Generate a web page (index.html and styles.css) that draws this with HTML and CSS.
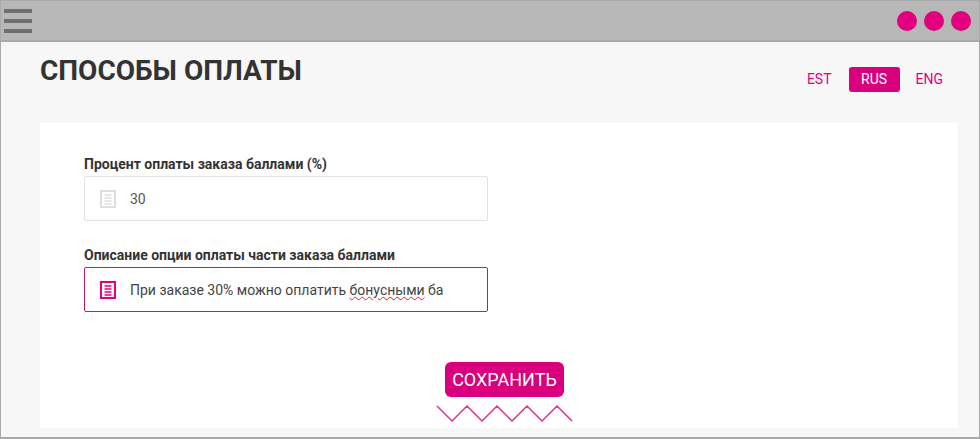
FILE: index.html
```html
<!DOCTYPE html>
<html lang="ru">
<head>
    <meta charset="UTF-8">
    <meta name="viewport" content="width=device-width, initial-scale=1.0">
    <title>Способы оплаты</title>
    <link rel="stylesheet" href="styles.css">
</head>
<body>

    <div class="window">
        <!-- Top bar with menu and dots -->
        <div class="top-bar">
            <div class="menu-icon">
                <span></span>
                <span></span>
                <span></span>
            </div>
            <div class="dots">
                <span></span>
                <span></span>
                <span></span>
            </div>
        </div>

        <div class="content">
            <div class="page-head">
                <h1>СПОСОБЫ ОПЛАТЫ</h1>
                <div class="lang-switch">
                    <a class="lang lang-est">EST</a>
                    <a class="lang lang-active">RUS</a>
                    <a class="lang lang-eng">ENG</a>
                </div>
            </div>

            <div class="card">
                <div class="field">
                    <label>Процент оплаты заказа баллами (%)</label>
                    <div class="input-box">
                        <svg class="doc-icon" width="16" height="18" viewBox="0 0 16 18">
                            <rect x="1" y="1" width="14" height="16" fill="none" stroke="#dedede" stroke-width="2"/>
                            <path d="M4.5 5h7M4.5 8h7M4.5 11h7M4.5 14h7" stroke="#dedede" stroke-width="1.4"/>
                        </svg>
                        <span class="input-text">30</span>
                    </div>
                </div>

                <div class="field">
                    <label>Описание опции оплаты части заказа баллами</label>
                    <div class="input-box input-focus">
                        <svg class="doc-icon" width="16" height="18" viewBox="0 0 16 18">
                            <rect x="1" y="1" width="14" height="16" fill="none" stroke="#e2007f" stroke-width="2"/>
                            <path d="M4.5 5h7M4.5 8h7M4.5 11h7M4.5 14h7" stroke="#e2007f" stroke-width="1.6"/>
                        </svg>
                        <span class="input-text">При заказе 30% можно оплатить <span class="misspelled">бонусными</span> ба</span>
                    </div>
                </div>

                <div class="save-area">
                    <button class="save-button">СОХРАНИТЬ</button>
                    <svg class="zigzag" width="138" height="17" viewBox="0 0 138 17">
                        <path d="M1 1l15 15 15-15 15 15 15-15 15 15 15-15 15 15 15-15 15 15" fill="none" stroke="#e8338f" stroke-width="1.5"/>
                    </svg>
                </div>
            </div>
        </div>
    </div>

</body>
</html>
```

FILE: styles.css
```css
/* Main page */
html, body {
    margin: 0;
    padding: 0;
}

body {
    font-family: Roboto, "Liberation Sans", sans-serif;
    background-color: #f7f7f7;
    color: #333;
}

.window {
    box-sizing: border-box;
    width: 980px;
    height: 439px;
    display: flex;
    flex-direction: column;
    border-left: 1px solid #aaa;
    border-right: 1px solid #aaa;
    border-bottom: 2px solid #aaa;
    overflow: hidden;
}

/* Grey top bar */
.top-bar {
    flex: none;
    height: 42px;
    box-sizing: border-box;
    display: flex;
    justify-content: space-between;
    align-items: center;
    padding: 0 8px 0 3px;
    background-color: #b7b7b7;
    border-top: 1px solid #aaa;
    border-bottom: 2px solid #a9a9a9;
    margin-bottom: 0;
}

.menu-icon {
    display: flex;
    flex-direction: column;
    gap: 6px;
}

.menu-icon span {
    display: block;
    width: 28px;
    height: 4px;
    background-color: #6f6f6f;
}

.dots {
    display: flex;
    gap: 7px;
}

.dots span {
    display: block;
    width: 20px;
    height: 20px;
    border-radius: 50%;
    background-color: #e2007f;
}

/* Title and language switch */
.content {
    flex: 1;
    display: flex;
    flex-direction: column;
    padding: 0 21px 9px 39px;
}

.page-head {
    flex: none;
    height: 81px;
    display: flex;
    justify-content: space-between;
    align-items: flex-start;
}

.page-head h1 {
    margin: 13px 0 0 0;
    font-size: 28px;
    line-height: 32px;
    font-weight: 700;
    color: #333;
}

.lang-switch {
    display: flex;
    align-items: center;
    margin-top: 25px;
    margin-right: 15px;
}

.lang {
    height: 25px;
    line-height: 25px;
    font-size: 14px;
    color: #e2007f;
}

.lang-est {
    margin-right: 17px;
}

.lang-eng {
    margin-left: 16px;
}

.lang-active {
    width: 51px;
    text-align: center;
    color: #fff;
    background-color: #d9007e;
    border-radius: 3px;
}

/* White card */
.card {
    flex: 1;
    display: flex;
    flex-direction: column;
    background-color: #fff;
    padding: 32px 0 0 44px;
}

.field {
    width: 404px;
    margin-bottom: 25px;
}

.field label {
    display: block;
    font-size: 14px;
    line-height: 18px;
    font-weight: 700;
    color: #333;
    margin-bottom: 3px;
}

.input-box {
    box-sizing: border-box;
    height: 45px;
    display: flex;
    align-items: center;
    gap: 14px;
    padding-left: 15px;
    background-color: #fff;
    border: 1px solid #e3e3e3;
    border-radius: 2px;
}

.input-focus {
    border-color: #c2186f;
}

.input-text {
    font-size: 14px;
    color: #555;
}

.input-focus .input-text {
    color: #444;
}

.misspelled {
    text-decoration: underline wavy #e02020 1px;
}

/* Save button with zigzag */
.save-area {
    width: 138px;
    margin: 25px 0 0 352px;
    display: flex;
    flex-direction: column;
    align-items: center;
}

.save-button {
    width: 119px;
    height: 35px;
    margin-right: 1px;
    padding: 0;
    font-family: inherit;
    font-size: 18px;
    color: #fff;
    background-color: #d9007e;
    border: none;
    border-radius: 6px;
}

.zigzag {
    display: block;
    margin-top: 8px;
}
```
